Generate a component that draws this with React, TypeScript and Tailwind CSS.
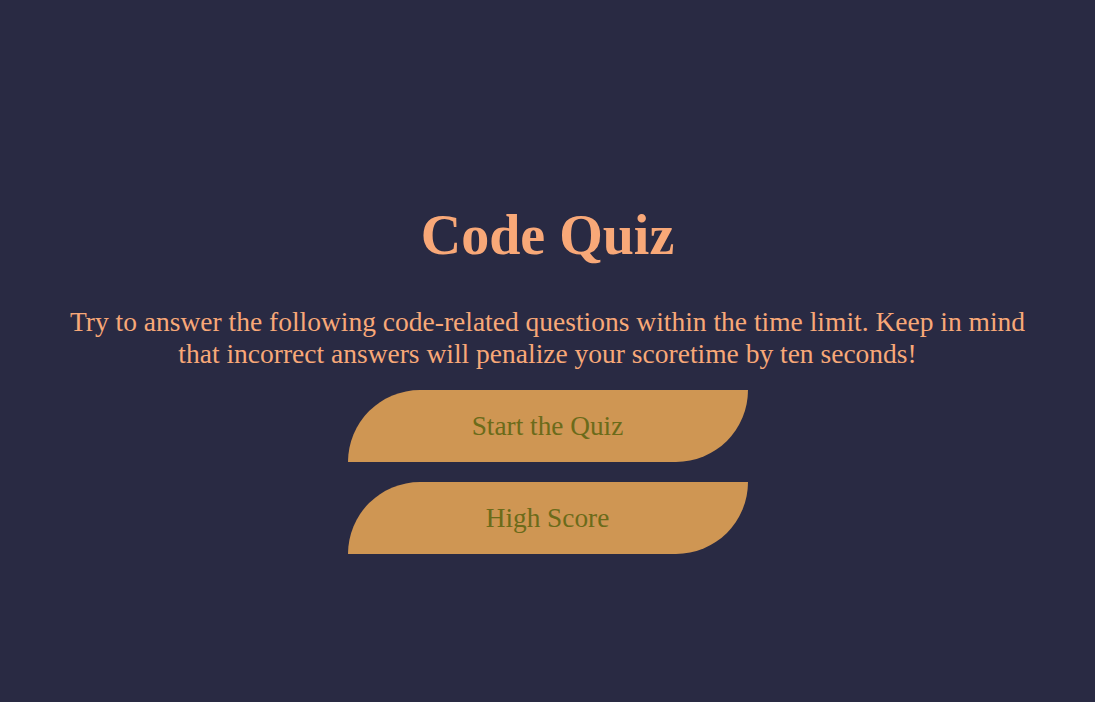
export default function App() {
  return (
    <div className="min-h-[702px] w-full bg-[#292a43] font-['Liberation_Serif',serif]">
      <div className="flex flex-col items-center pt-[203px] text-center">
        <h1 className="text-[56px] font-bold leading-[64px] text-[#f8a878]">Code Quiz</h1>
        <p className="mt-[39px] max-w-[980px] text-[27.5px] leading-[32px] text-[#f8a878]">
          Try to answer the following code-related questions within the time limit. Keep in mind
          that incorrect answers will penalize your scoretime by ten seconds!
        </p>
        <div className="mt-[20px] flex flex-col gap-[20px]">
          <button className="h-[72px] w-[400px] rounded-tl-[72px] rounded-br-[72px] bg-[#cf9653] text-[27.3px] text-[#6b6b1a]">
            Start the Quiz
          </button>
          <button className="h-[72px] w-[400px] rounded-tl-[72px] rounded-br-[72px] bg-[#cf9653] text-[27.3px] text-[#6b6b1a]">
            High Score
          </button>
        </div>
      </div>
    </div>
  );
}
